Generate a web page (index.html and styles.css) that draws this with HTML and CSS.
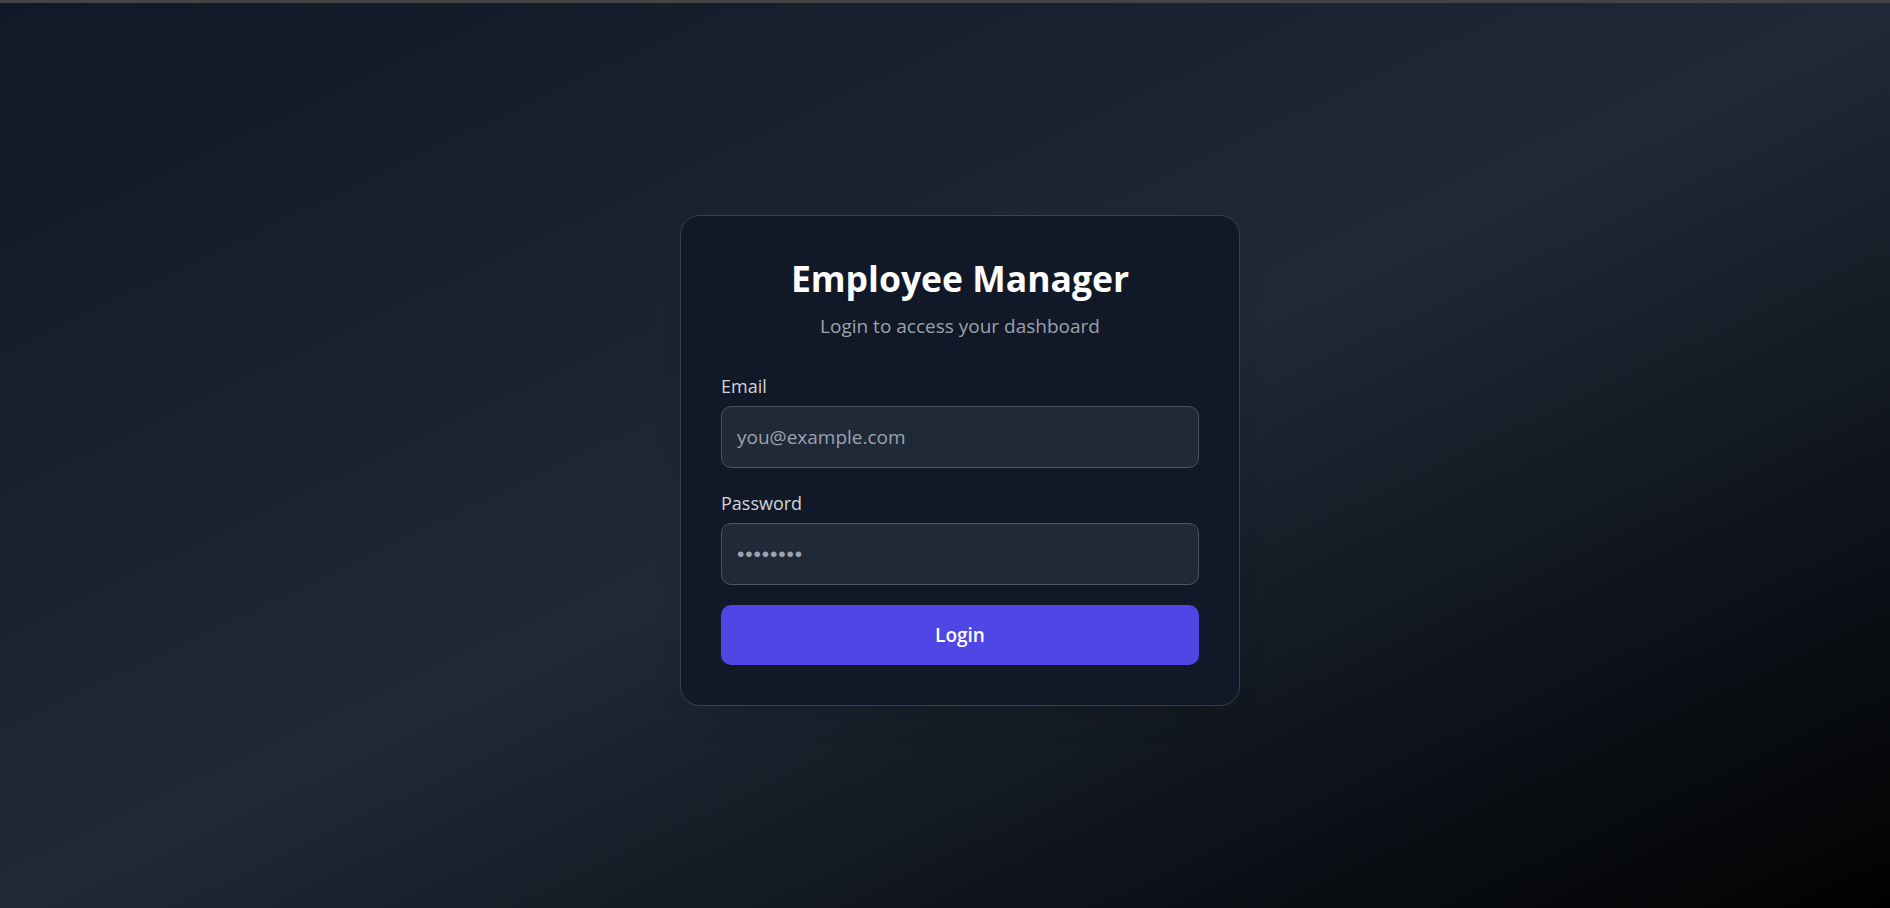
FILE: index.html
```html
<!DOCTYPE html>
<html lang="en">
<head>
<meta charset="utf-8">
<title>Employee Manager - Login</title>
<link rel="stylesheet" href="styles.css">
</head>
<body>
<div class="topbar"></div>
<main class="page">
  <div class="card">
    <h1 class="title">Employee Manager</h1>
    <p class="subtitle">Login to access your dashboard</p>
    <form class="form">
      <div class="field">
        <label class="label" for="email">Email</label>
        <input class="input" id="email" type="email" placeholder="you@example.com">
      </div>
      <div class="field">
        <label class="label" for="password">Password</label>
        <input class="input input-password" id="password" type="password" placeholder="••••••••">
      </div>
      <button class="btn" type="button">Login</button>
    </form>
  </div>
</main>
</body>
</html>
```

FILE: styles.css
```css
html, body {
  margin: 0;
  padding: 0;
  overflow: hidden;
  background: #000;
}

body {
  font-family: "Open Sans", "Noto Sans", sans-serif;
  color: #fff;
}

.topbar {
  height: 3px;
  background: #444444;
}

.page {
  width: 1920px;
  height: 914px;
  display: flex;
  align-items: center;
  justify-content: center;
  background: linear-gradient(to bottom right, #111827 0%, #1f2937 50%, #000000 100%);
}

.card {
  box-sizing: border-box;
  width: 560px;
  padding: 40px;
  background: #111827;
  border: 1px solid #374151;
  border-radius: 20px;
  box-shadow: 0 20px 40px -20px rgba(0, 0, 0, 0.15);
}

.title {
  margin: 0;
  font-size: 35.5px;
  line-height: 45px;
  font-weight: 700;
  text-align: center;
  color: #ffffff;
}

.subtitle {
  margin: 10px 0 0;
  font-size: 19px;
  line-height: 30px;
  text-align: center;
  color: #9ca3af;
}

.form {
  margin-top: 30px;
  display: flex;
  flex-direction: column;
  gap: 20px;
}

.field {
  display: flex;
  flex-direction: column;
  gap: 5px;
}

.label {
  font-size: 18px;
  line-height: 30px;
  color: #d1d5db;
}

.input {
  box-sizing: border-box;
  width: 100%;
  height: 62px;
  margin: 0;
  padding: 0 15px;
  font-family: inherit;
  font-size: 19px;
  color: #f3f4f6;
  background: #1f2937;
  border: 1px solid #4b5563;
  border-radius: 10px;
  outline: none;
}

.input::placeholder {
  color: #9ca3af;
  opacity: 1;
}

.input-password::placeholder {
  font-family: "Liberation Sans", Arial, sans-serif;
  font-size: 21px;
  letter-spacing: 0.9px;
}

.btn {
  box-sizing: border-box;
  width: 100%;
  height: 60px;
  margin: 0;
  padding: 0;
  border: none;
  border-radius: 10px;
  background: #4f46e5;
  color: #ffffff;
  font-family: inherit;
  font-size: 19px;
  line-height: 30px;
  font-weight: 600;
  cursor: pointer;
}
```
